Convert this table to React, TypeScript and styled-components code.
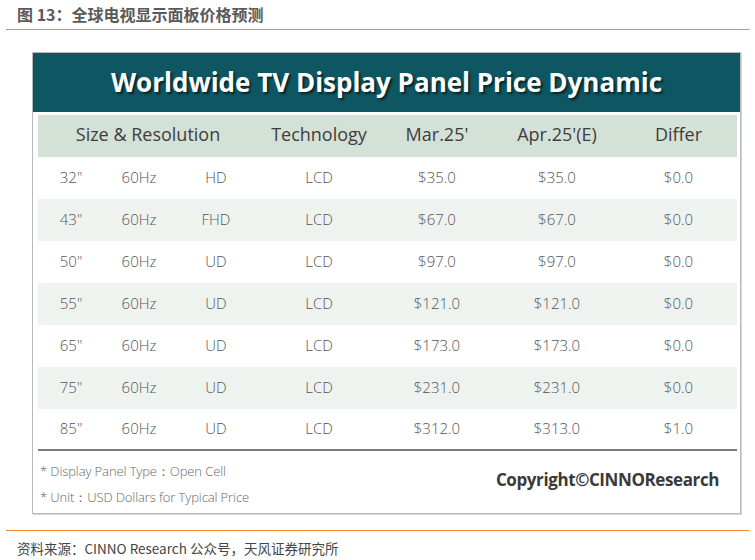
import React from "react";
import styled, { createGlobalStyle } from "styled-components";

const GlobalStyle = createGlobalStyle`
  html, body {
    margin: 0;
    padding: 0;
    background: #ffffff;
  }
`;

const Page = styled.div`
  width: 755px;
  height: 560px;
  overflow: hidden;
  background: #ffffff;
  font-family: "Open Sans", "Noto Sans", sans-serif;
`;

const FigureTitle = styled.div`
  margin: 0 6px 0 6px;
  padding: 4px 0 0 11px;
  height: 25px;
  border-bottom: 1.5px solid #f5862a;
  font-family: "Noto Sans CJK SC", "Noto Sans", sans-serif;
  font-weight: 700;
  font-size: 16px;
  line-height: 20px;
  color: #5a5a5a;
`;

const Panel = styled.div`
  margin: 22px 0 0 32px;
  width: 707px;
  height: 460px;
  border: 1px solid #b9b9b9;
  box-shadow: 1px 1px 0 #d6d6d6;
  display: flex;
  flex-direction: column;
`;

const Banner = styled.div`
  height: 59px;
  background: #0e5661;
  display: flex;
  align-items: center;
  justify-content: center;
  font-family: "Open Sans", "Noto Sans", sans-serif;
  font-weight: 700;
  font-size: 26px;
  color: #ffffff;
  text-shadow: 2px 2px 2px rgba(0, 0, 0, 0.55);
  padding-bottom: 2px;
  box-sizing: border-box;
`;

const TableArea = styled.div`
  padding: 3px 3px 0 5px;
`;

const columns = "66px 70px 84px 122px 114px 126px 117px";

const HeadRow = styled.div`
  display: grid;
  grid-template-columns: ${columns};
  height: 42px;
  align-items: center;
  background: #d4e1d7;
  font-size: 18px;
  color: #3d3d3d;
`;

const HeadCell = styled.div<{ span?: number }>`
  grid-column: span ${(p) => p.span ?? 1};
  text-align: center;
  padding-bottom: 4px;
`;

const Row = styled.div<{ shaded: boolean; last?: boolean }>`
  display: grid;
  grid-template-columns: ${columns};
  height: ${(p) => (p.last ? 40 : 42)}px;
  align-items: center;
  background: ${(p) => (p.shaded ? "#eef3f0" : "#ffffff")};
  font-size: 15px;
  font-weight: 300;
  color: #555555;
  border-bottom: ${(p) => (p.last ? "2px solid #7a7a7a" : "none")};
`;

const Cell = styled.div`
  text-align: center;
  padding-bottom: 2px;
`;

const Footer = styled.div`
  flex: 1;
  display: flex;
  justify-content: space-between;
  padding: 7px 21px 0 7px;
`;

const Notes = styled.div`
  display: flex;
  flex-direction: column;
  font-size: 13px;
  font-weight: 300;
  line-height: 26px;
  color: #666666;
  letter-spacing: -0.1px;
`;

const Copyright = styled.div`
  font-family: "Open Sans", "Noto Sans", sans-serif;
  font-weight: 700;
  font-size: 17px;
  color: #3a3a3a;
  padding-top: 10px;
  letter-spacing: -0.4px;
`;

const Source = styled.div`
  margin: 16px 6px 0 6px;
  border-top: 1.5px solid #f5862a;
  padding: 7px 0 0 11px;
  font-family: "Noto Sans CJK SC", "Noto Sans", sans-serif;
  font-size: 13.5px;
  color: #444444;
`;

const rows = [
  ["32\"", "60Hz", "HD", "LCD", "$35.0", "$35.0", "$0.0"],
  ["43\"", "60Hz", "FHD", "LCD", "$67.0", "$67.0", "$0.0"],
  ["50\"", "60Hz", "UD", "LCD", "$97.0", "$97.0", "$0.0"],
  ["55\"", "60Hz", "UD", "LCD", "$121.0", "$121.0", "$0.0"],
  ["65\"", "60Hz", "UD", "LCD", "$173.0", "$173.0", "$0.0"],
  ["75\"", "60Hz", "UD", "LCD", "$231.0", "$231.0", "$0.0"],
  ["85\"", "60Hz", "UD", "LCD", "$312.0", "$313.0", "$1.0"],
];

export default function App() {
  return (
    <Page>
      <GlobalStyle />
      <FigureTitle>图 13：全球电视显示面板价格预测</FigureTitle>
      <Panel>
        <Banner>Worldwide TV Display Panel Price Dynamic</Banner>
        <TableArea>
          <HeadRow>
            <HeadCell span={3}>Size &amp; Resolution</HeadCell>
            <HeadCell>Technology</HeadCell>
            <HeadCell>Mar.25'</HeadCell>
            <HeadCell>Apr.25'(E)</HeadCell>
            <HeadCell>Differ</HeadCell>
          </HeadRow>
          {rows.map((r, i) => (
            <Row key={r[0]} shaded={i % 2 === 1} last={i === rows.length - 1}>
              {r.map((v, j) => (
                <Cell key={j}>{v}</Cell>
              ))}
            </Row>
          ))}
        </TableArea>
        <Footer>
          <Notes>
            <span>* Display Panel Type：Open Cell</span>
            <span>* Unit：USD Dollars for Typical Price</span>
          </Notes>
          <Copyright>Copyright©CINNOResearch</Copyright>
        </Footer>
      </Panel>
      <Source>资料来源：CINNO Research 公众号，天风证券研究所</Source>
    </Page>
  );
}
